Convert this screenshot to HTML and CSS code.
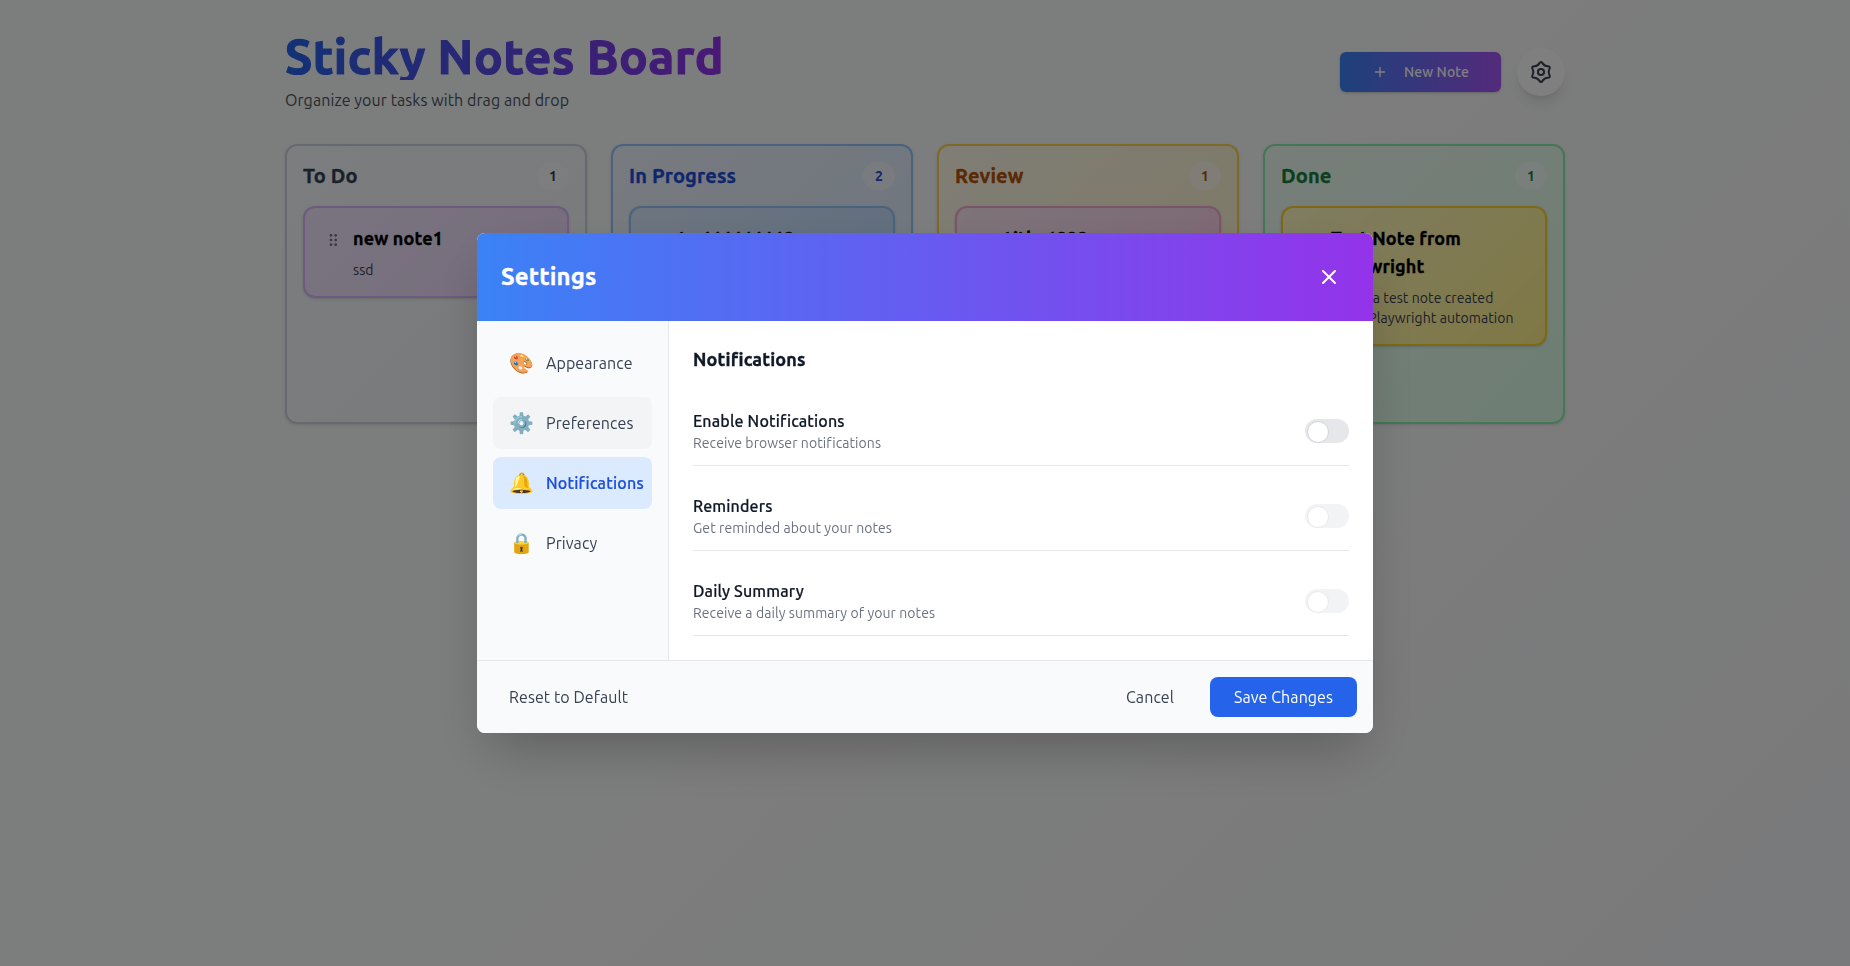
FILE: index.html
```html
<!DOCTYPE html>
<html lang="en">
<head>
<meta charset="utf-8">
<title>Sticky Notes Board</title>
<link rel="stylesheet" href="styles.css">
</head>
<body>
<div class="page">
  <header class="top">
    <div>
      <h1 class="brand">Sticky Notes Board</h1>
      <p class="tagline">Organize your tasks with drag and drop</p>
    </div>
    <div class="actions">
      <button class="new-note"><svg width="16" height="16" viewBox="0 0 24 24" class="stroke"><path d="M5 12h14M12 5v14"/></svg><span>New Note</span></button>
      <button class="gear"><svg width="24" height="24" viewBox="0 0 24 24" class="stroke"><path d="M10.3 3.36Q12 .6 13.7 3.36Q15.4 6.11 18.64 6.2Q21.87 6.3 20.34 9.15Q18.8 12 20.34 14.85Q21.87 17.7 18.64 17.8Q15.4 17.89 13.7 20.64Q12 23.4 10.3 20.64Q8.6 17.89 5.36 17.8Q2.13 17.7 3.66 14.85Q5.2 12 3.66 9.15Q2.13 6.3 5.36 6.2Q8.6 6.11 10.3 3.36z"/><circle cx="12" cy="12" r="3.1"/></svg></button>
    </div>
  </header>
  <main class="board">
    <section class="column todo">
      <div class="column-head"><h2>To Do</h2><span class="count">1</span></div>
      <article class="note purple">
        <svg class="grip" width="16" height="16" viewBox="0 0 24 24"><g><circle cx="9" cy="5" r="2"/><circle cx="9" cy="12" r="2"/><circle cx="9" cy="19" r="2"/><circle cx="16" cy="5" r="2"/><circle cx="16" cy="12" r="2"/><circle cx="16" cy="19" r="2"/></g></svg>
        <div><h3>new note1</h3><p>ssd</p></div>
      </article>
    </section>
    <section class="column progress">
      <div class="column-head"><h2>In Progress</h2><span class="count">2</span></div>
      <article class="note blue"><span class="grip"></span><div><h3>te 111111112</h3><p>note</p></div></article>
    </section>
    <section class="column review">
      <div class="column-head"><h2>Review</h2><span class="count">1</span></div>
      <article class="note pink"><span class="grip"></span><div><h3>title 1222</h3><p>note</p></div></article>
    </section>
    <section class="column done">
      <div class="column-head"><h2>Done</h2><span class="count">1</span></div>
      <article class="note yellow"><span class="grip"></span><div><h3>Test Note from<br>Playwright</h3><p>This is a test note created<br>using Playwright automation</p></div></article>
    </section>
  </main>
</div>
<div class="overlay">
  <div class="modal">
    <div class="modal-head"><h2>Settings</h2><button class="close"><svg width="24" height="24" viewBox="0 0 24 24" class="stroke"><path d="M6 18L18 6M6 6l12 12"/></svg></button></div>
    <div class="modal-body">
      <nav class="side">
        <a class="item"><span class="emoji">🎨</span><span>Appearance</span></a>
        <a class="item hover"><span class="emoji">⚙️</span><span>Preferences</span></a>
        <a class="item active"><span class="emoji">🔔</span><span>Notifications</span></a>
        <a class="item"><span class="emoji">🔒</span><span>Privacy</span></a>
      </nav>
      <div class="content">
        <h3>Notifications</h3>
        <div class="rows">
          <div class="row"><div><h4>Enable Notifications</h4><p>Receive browser notifications</p></div><span class="toggle"></span></div>
          <div class="row"><div><h4>Reminders</h4><p>Get reminded about your notes</p></div><span class="toggle disabled"></span></div>
          <div class="row"><div><h4>Daily Summary</h4><p>Receive a daily summary of your notes</p></div><span class="toggle disabled"></span></div>
        </div>
      </div>
    </div>
    <footer class="modal-foot">
      <button class="plain">Reset to Default</button>
      <div class="foot-right"><button class="plain cancel">Cancel</button><button class="save">Save Changes</button></div>
    </footer>
  </div>
</div>
</body>
</html>
```
FILE: styles.css
```css
* { box-sizing: border-box; margin: 0; padding: 0; }
body { font-family: Ubuntu, "Noto Sans", "Open Sans", sans-serif; font-size: 16px; line-height: 24px; letter-spacing: .08px; height: 966px; overflow: hidden; background: linear-gradient(135deg, #f9fafa 0%, #f9fafa 50%, #f3f4f6 100%); }
button { font: inherit; letter-spacing: inherit; color: inherit; border: 0; background: none; display: flex; align-items: center; justify-content: center; white-space: nowrap; }
h1, h2, h3 { -webkit-text-stroke: .35px; letter-spacing: .15px; }
.stroke { fill: none; stroke: currentColor; stroke-width: 2; stroke-linecap: round; stroke-linejoin: round; }
.page { width: 1280px; margin: 0 auto; padding-top: 32px; }
.top { display: flex; align-items: center; justify-content: space-between; height: 80px; margin-bottom: 32px; }
.brand { width: 438px; height: 48px; font-size: 48px; line-height: 48px; letter-spacing: .46px; -webkit-text-stroke: 1.2px transparent; white-space: nowrap; color: transparent; background: linear-gradient(90deg, #2563eb, #9333ea); -webkit-background-clip: text; background-clip: text; }
.tagline { margin-top: 8px; color: #4b5563; }
.actions { display: flex; align-items: center; gap: 16px; }
.new-note { width: 161px; height: 40px; gap: 16px; border-radius: 6px; color: #fff; font-size: 14px; font-weight: 500; background: linear-gradient(90deg, #3b82f6, #a855f7); box-shadow: 0 1px 3px rgba(0,0,0,.2); }
.gear { width: 48px; height: 48px; border-radius: 50%; background: #fff; color: #374151; box-shadow: 0 10px 15px -3px rgba(0,0,0,.1), 0 4px 6px -4px rgba(0,0,0,.1); }
.board { display: grid; grid-template-columns: repeat(4, 1fr); gap: 24px; }
.column { height: 280px; overflow: hidden; padding: 16px; border: 2px solid; border-radius: 12px; box-shadow: 0 1px 3px rgba(0,0,0,.12); }
.column-head { display: flex; justify-content: space-between; align-items: center; height: 28px; margin-bottom: 16px; }
.column-head h2 { font-size: 20px; line-height: 28px; }
.count { width: 32px; height: 28px; border-radius: 14px; background: rgba(255,255,255,.5); text-align: center; line-height: 28px; font-size: 14px; font-weight: 700; }
.todo { border-color: #cbd5e1; background: linear-gradient(135deg, #f8fafc, #f1f5f9); color: #334155; }
.progress { border-color: #93c5fd; background: linear-gradient(135deg, #eff6ff, #dbeafe); color: #1d4ed8; }
.review { border-color: #fcd34d; background: linear-gradient(135deg, #fffbeb, #fef3c7); color: #b45309; }
.done { border-color: #86efac; background: linear-gradient(135deg, #f0fdf4, #dcfce7); color: #15803d; }
.note { display: flex; gap: 12px; padding: 16px 16px 16px 20px; border: 2px solid; border-radius: 12px; box-shadow: 0 1px 3px rgba(0,0,0,.15); }
.grip { width: 16px; flex: none; margin-top: 8px; fill: #6b7280; }
.note h3 { font-size: 18px; line-height: 28px; color: #000; white-space: nowrap; }
.note p { margin-top: 8px; font-size: 14px; line-height: 20px; color: #374151; white-space: nowrap; }
.purple { border-color: #d8b4fe; background: linear-gradient(135deg, #f3e8ff, #ecd9f8); }
.blue { border-color: #93c5fd; background: linear-gradient(135deg, #dbeafe, #bfdbfe); }
.pink { border-color: #f9a8d4; background: linear-gradient(135deg, #fce7f3, #fbcfe8); }
.yellow { border-color: #fbd12c; background: linear-gradient(135deg, #fef9c3, #fef08a); }
.overlay { position: fixed; inset: 0; display: flex; align-items: center; justify-content: center; background: rgba(0,0,0,.5); }
.modal { width: 896px; height: 500px; display: flex; flex-direction: column; overflow: hidden; border-radius: 8px; background: #fff; box-shadow: 0 25px 50px -12px rgba(0,0,0,.25); }
.modal-head { height: 88px; padding: 0 24px; display: flex; justify-content: space-between; align-items: center; color: #fff; background: linear-gradient(90deg, #3b82f6, #9333ea); }
.modal-head h2 { font-size: 24px; line-height: 32px; }
.close { width: 40px; height: 40px; }
.modal-body { flex: 1; display: flex; }
.side { width: 192px; padding: 16px; display: flex; flex-direction: column; gap: 8px; background: #f9fafb; border-right: 1px solid #e5e7eb; }
.item { height: 52px; padding-left: 16px; display: flex; align-items: center; gap: 12px; border-radius: 8px; color: #374151; white-space: nowrap; }
.hover { background: #f3f4f6; }
.active { background: #dbeafe; color: #1d4ed8; font-weight: 500; letter-spacing: .2px; -webkit-text-stroke: .2px; }
.emoji { width: 25px; font-size: 20px; line-height: 28px; font-family: "Noto Color Emoji", sans-serif; }
.content { flex: 1; padding: 24px; color: #111827; }
.content > h3 { font-size: 18px; line-height: 28px; margin-bottom: 24px; }
.rows { display: flex; flex-direction: column; gap: 16px; }
.row { height: 69px; padding: 12px 0; border-bottom: 1px solid #e5e7eb; display: flex; align-items: center; justify-content: space-between; }
.row h4 { font-weight: 500; font-size: 16px; line-height: 24px; letter-spacing: .15px; -webkit-text-stroke: .2px; }
.row p { font-size: 14px; line-height: 20px; color: #6b7280; }
.toggle { width: 44px; height: 24px; padding: 2px; border-radius: 12px; background: #e5e7eb; }
.toggle::before { content: ""; display: block; width: 20px; height: 20px; border: 1px solid #d1d5db; border-radius: 50%; background: #fff; }
.disabled { opacity: .5; }
.modal-foot { height: 73px; padding: 16px; display: flex; justify-content: space-between; border-top: 1px solid #e5e7eb; background: #f9fafb; }
.foot-right { display: flex; gap: 12px; }
.plain { height: 40px; padding: 0 16px; color: #374151; }
.cancel { width: 96px; }
.save { width: 147px; height: 40px; border-radius: 8px; background: #2563eb; color: #fff; }
```
